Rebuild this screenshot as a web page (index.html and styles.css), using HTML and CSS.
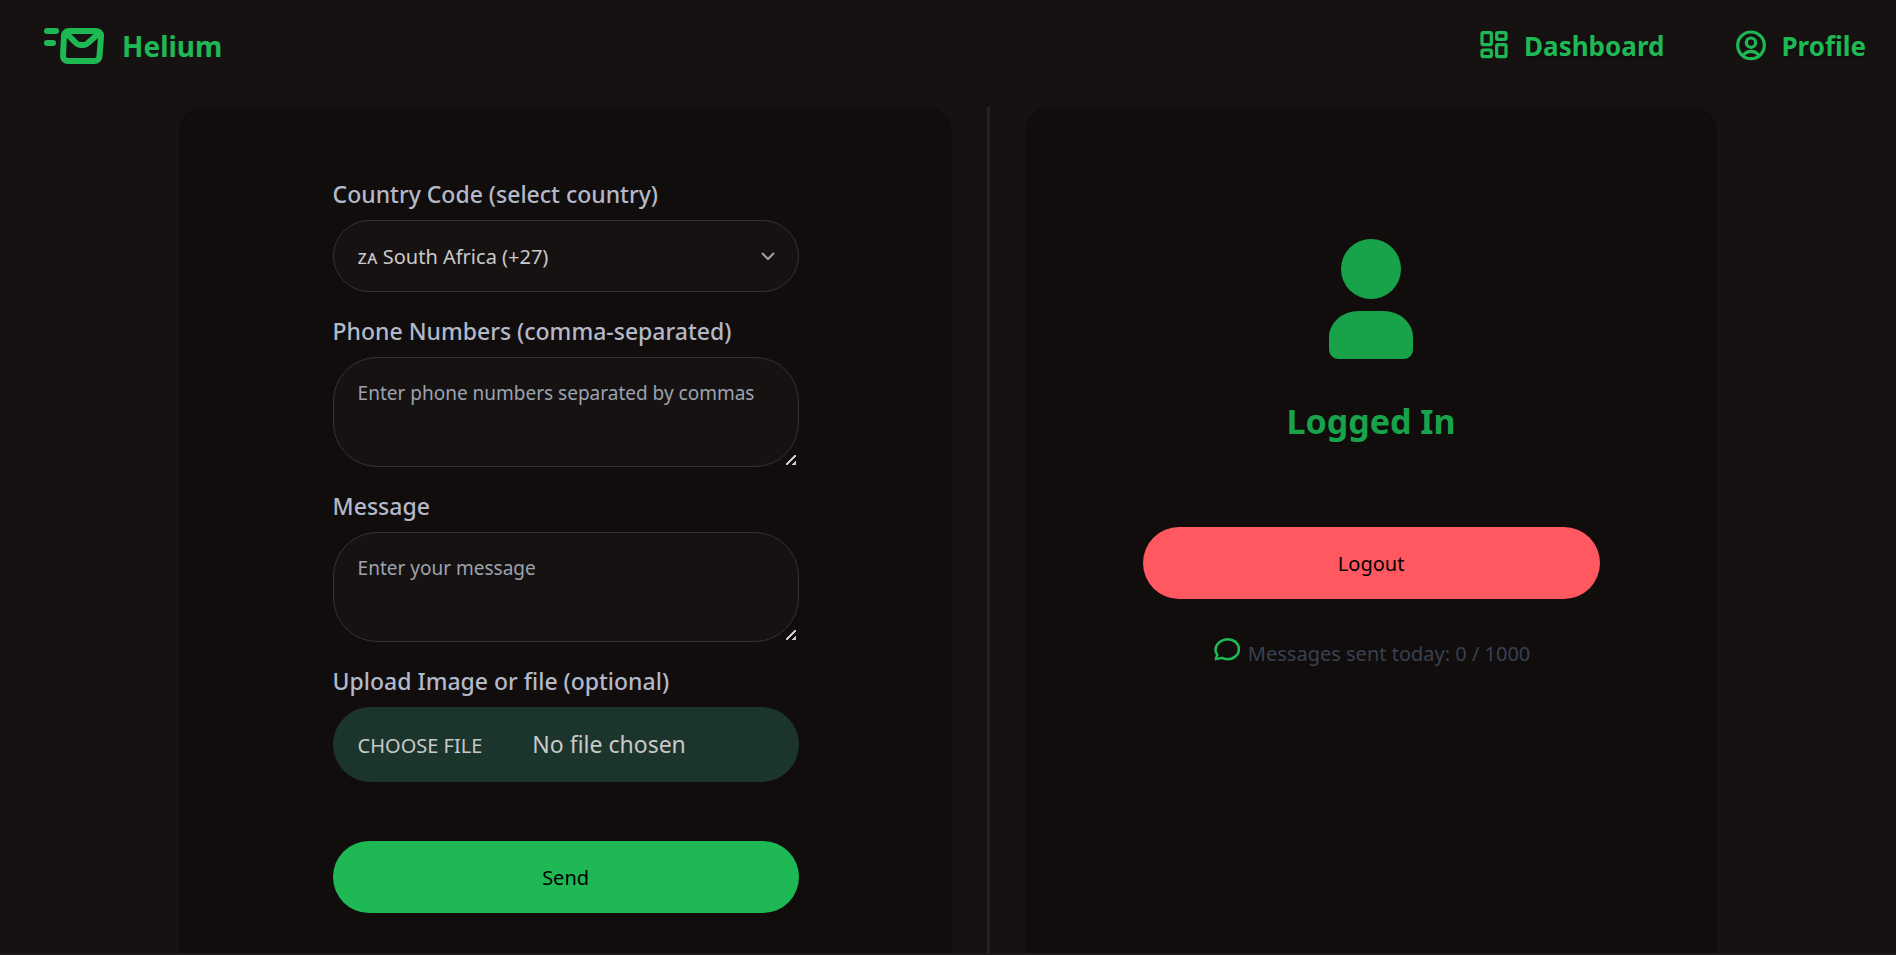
FILE: index.html
```html
<!DOCTYPE html>
<html lang="en">
<head>
    <meta charset="UTF-8">
    <meta name="viewport" content="width=device-width, initial-scale=1.0">
    <title>Helium</title>
    <link rel="stylesheet" href="styles.css">
</head>
<body>
    <header class="navbar">
        <a href="#" class="brand">
            <svg class="brand-icon" viewBox="0 0 60 36" fill="none" stroke="currentColor" stroke-width="6" stroke-linecap="round" stroke-linejoin="round">
                <path d="M3 3h9M3 15h6"/>
                <path d="M25 3h27a5 5 0 0 1 5 5.500l-1.500 19.500a5 5 0 0 1-5 5H24a5 5 0 0 1-5-5.500l1-19.500a5 5 0 0 1 5-5z"/>
                <path d="M23 6l9 9q2 2 4 2h4q2 0 4-2l10-9"/>
            </svg>
            <span>Helium</span>
        </a>
        <nav class="nav-links">
            <a href="#">
                <svg class="nav-icon" viewBox="0 0 24 24" fill="none" stroke="currentColor" stroke-width="2.400" stroke-linejoin="round">
                    <rect x="3" y="2" width="7" height="9" rx="1"/>
                    <rect x="14" y="2" width="7" height="5" rx="1"/>
                    <rect x="14" y="11" width="7" height="9" rx="1"/>
                    <rect x="3" y="15" width="7" height="5" rx="1"/>
                </svg>
                <span>Dashboard</span>
            </a>
            <a href="#">
                <svg class="nav-icon" viewBox="0 0 24 24" fill="none" stroke="currentColor" stroke-width="2.400" stroke-linecap="round">
                    <circle cx="12" cy="11.500" r="10"/>
                    <circle cx="12" cy="9.500" r="3.500"/>
                    <path d="M6.500 18.500Q8.500 16 12 16t5.500 2.500"/>
                </svg>
                <span>Profile</span>
            </a>
        </nav>
    </header>

    <main class="dashboard">
        <!-- Message form -->
        <section class="card">
            <form class="message-form">
                <div class="field">
                    <label for="country">Country Code (select country)</label>
                    <div class="select-wrap">
                        <select id="country" class="control select">
                            <option>ᴢᴀ South Africa (+27)</option>
                        </select>
                        <svg class="chevron" viewBox="0 0 16 10" fill="none" stroke="currentColor" stroke-width="2">
                            <path d="M2 2l6 6 6-6"/>
                        </svg>
                    </div>
                </div>
                <div class="field">
                    <label for="phones">Phone Numbers (comma-separated)</label>
                    <textarea id="phones" class="control textarea" placeholder="Enter phone numbers separated by commas"></textarea>
                </div>
                <div class="field">
                    <label for="message">Message</label>
                    <textarea id="message" class="control textarea" placeholder="Enter your message"></textarea>
                </div>
                <div class="field">
                    <label for="upload">Upload Image or file (optional)</label>
                    <input type="file" id="upload" class="file-input">
                </div>
                <button type="button" class="btn btn-primary">Send</button>
            </form>
        </section>

        <div class="divider"></div>

        <!-- Account status -->
        <section class="card status">
            <svg class="user-icon" viewBox="0 0 84 120" fill="currentColor">
                <circle cx="42" cy="30" r="30"/>
                <path d="M30 72h24a30 26 0 0 1 30 27v12a9 9 0 0 1-9 9H9a9 9 0 0 1-9-9V99a30 26 0 0 1 30-27z"/>
            </svg>
            <h1>Logged In</h1>
            <button type="button" class="btn btn-error">Logout</button>
            <p class="usage">
                <svg class="usage-icon" viewBox="0 0 24 24" fill="none" stroke="currentColor" stroke-width="2" stroke-linecap="round" stroke-linejoin="round">
                    <path d="M12.500 2.500c5 0 9 3.500 9 8s-4 8-9 8c-1.800 0-3.200-.300-4.500-1l-5 1 1.300-3.500C3 13.800 2.800 12.200 2.800 11c0-4.500 4.700-8.500 9.700-8.500z"/>
                </svg>
                <span>Messages sent today: 0 / 1000</span>
            </p>
        </section>
    </main>
</body>
</html>
```

FILE: styles.css
```css
* {
    margin: 0;
    padding: 0;
    box-sizing: border-box;
}

:root {
    color-scheme: dark;
    --base: #171212;
    --card: #110d0c;
    --primary: #1eb854;
    --muted: #9ca3af;
}

body {
    display: flex;
    flex-direction: column;
    min-height: 100vh;
    font-family: "Noto Sans", sans-serif;
    font-size: 20px;
    background: var(--base);
    color: #cac9c9;
    border-bottom: 2px solid #1f191c;
}

a {
    color: inherit;
    text-decoration: none;
}

/* Navbar */
.navbar {
    display: flex;
    justify-content: space-between;
    align-items: center;
    height: 92px;
    padding: 0 30px 0 44px;
    margin-bottom: 15px;
    color: var(--primary);
    font-weight: 700;
}

.brand,
.nav-links a {
    display: flex;
    align-items: center;
}

.brand {
    gap: 18px;
    font-size: 28px;
}

.brand-icon {
    width: 60px;
    height: 36px;
}

.nav-links {
    display: flex;
    gap: 71px;
    font-size: 26px;
    text-shadow: 0 2px 4px rgba(0, 0, 0, 0.4);
}

.nav-links a {
    gap: 14px;
}

.nav-icon {
    width: 32px;
    height: 32px;
}

/* Two cards with a line between them */
.dashboard {
    flex: 1;
    display: grid;
    grid-template-columns: 19fr 3px 17fr;
    gap: 35px;
    width: 100%;
    max-width: 1538px;
    margin: 0 auto;
}

.card {
    display: flex;
    flex-direction: column;
    align-items: center;
    padding: 71px 24px 24px;
    background: var(--card);
    border-radius: 24px 24px 0 0;
}

.divider {
    background: #262222;
}

/* Form */
.message-form {
    width: 100%;
    max-width: 466px;
}

.field {
    display: flex;
    flex-direction: column;
    gap: 10px;
    margin-bottom: 23px;
}

.field label {
    font-size: 23px;
    line-height: 32px;
    font-weight: 500;
    color: #b3b9c9;
}

.control {
    display: block;
    width: 100%;
    font: inherit;
    color: inherit;
    background: var(--base);
    border: 1px solid #363231;
}

.select-wrap {
    position: relative;
}

.select {
    appearance: none;
    height: 72px;
    padding: 0 24px;
    border-radius: 36px;
}

.chevron {
    position: absolute;
    right: 23px;
    top: 31px;
    width: 16px;
    height: 10px;
    color: var(--muted);
    pointer-events: none;
}

.textarea {
    height: 110px;
    padding: 18px 24px;
    font-size: 19px;
    line-height: 34px;
    border-radius: 44px;
    resize: vertical;
    overflow: hidden;
}

.textarea::placeholder {
    color: var(--muted);
}

.textarea::-webkit-resizer {
    background: linear-gradient(135deg, transparent 44%, #c8c8c8 44%, #c8c8c8 58%, transparent 58%, transparent 80%, #c8c8c8 80%) 3px 4px / 10px 10px no-repeat;
}

.file-input {
    width: 100%;
    height: 75px;
    font: inherit;
    font-size: 23px;
    line-height: 75px;
    color: #cac9c9;
    background: #1b352c;
    border-radius: 38px;
    overflow: hidden;
}

.file-input::file-selector-button {
    height: 75px;
    padding: 0 25px;
    margin-right: 25px;
    font: inherit;
    font-size: 20px;
    text-transform: uppercase;
    color: inherit;
    background: transparent;
    border: 0;
}

/* Buttons */
.btn {
    width: 100%;
    height: 72px;
    font: inherit;
    color: #000;
    border: 0;
    border-radius: 36px;
    cursor: pointer;
}

.btn-primary {
    margin-top: 36px;
    background: var(--primary);
}

.btn-error {
    max-width: 457px;
    background: #ff5861;
}

/* Status card */
.status {
    padding-top: 132px;
}

.user-icon {
    width: 84px;
    height: 120px;
    color: #18a34a;
}

.status h1 {
    margin: 40px 0 84px;
    font-size: 34px;
    line-height: 44px;
    color: #18a34a;
}

.usage {
    display: flex;
    gap: 6px;
    margin-top: 37px;
    line-height: 36px;
    color: #384152;
}

.usage-icon {
    width: 30px;
    height: 30px;
    color: var(--primary);
}
```
